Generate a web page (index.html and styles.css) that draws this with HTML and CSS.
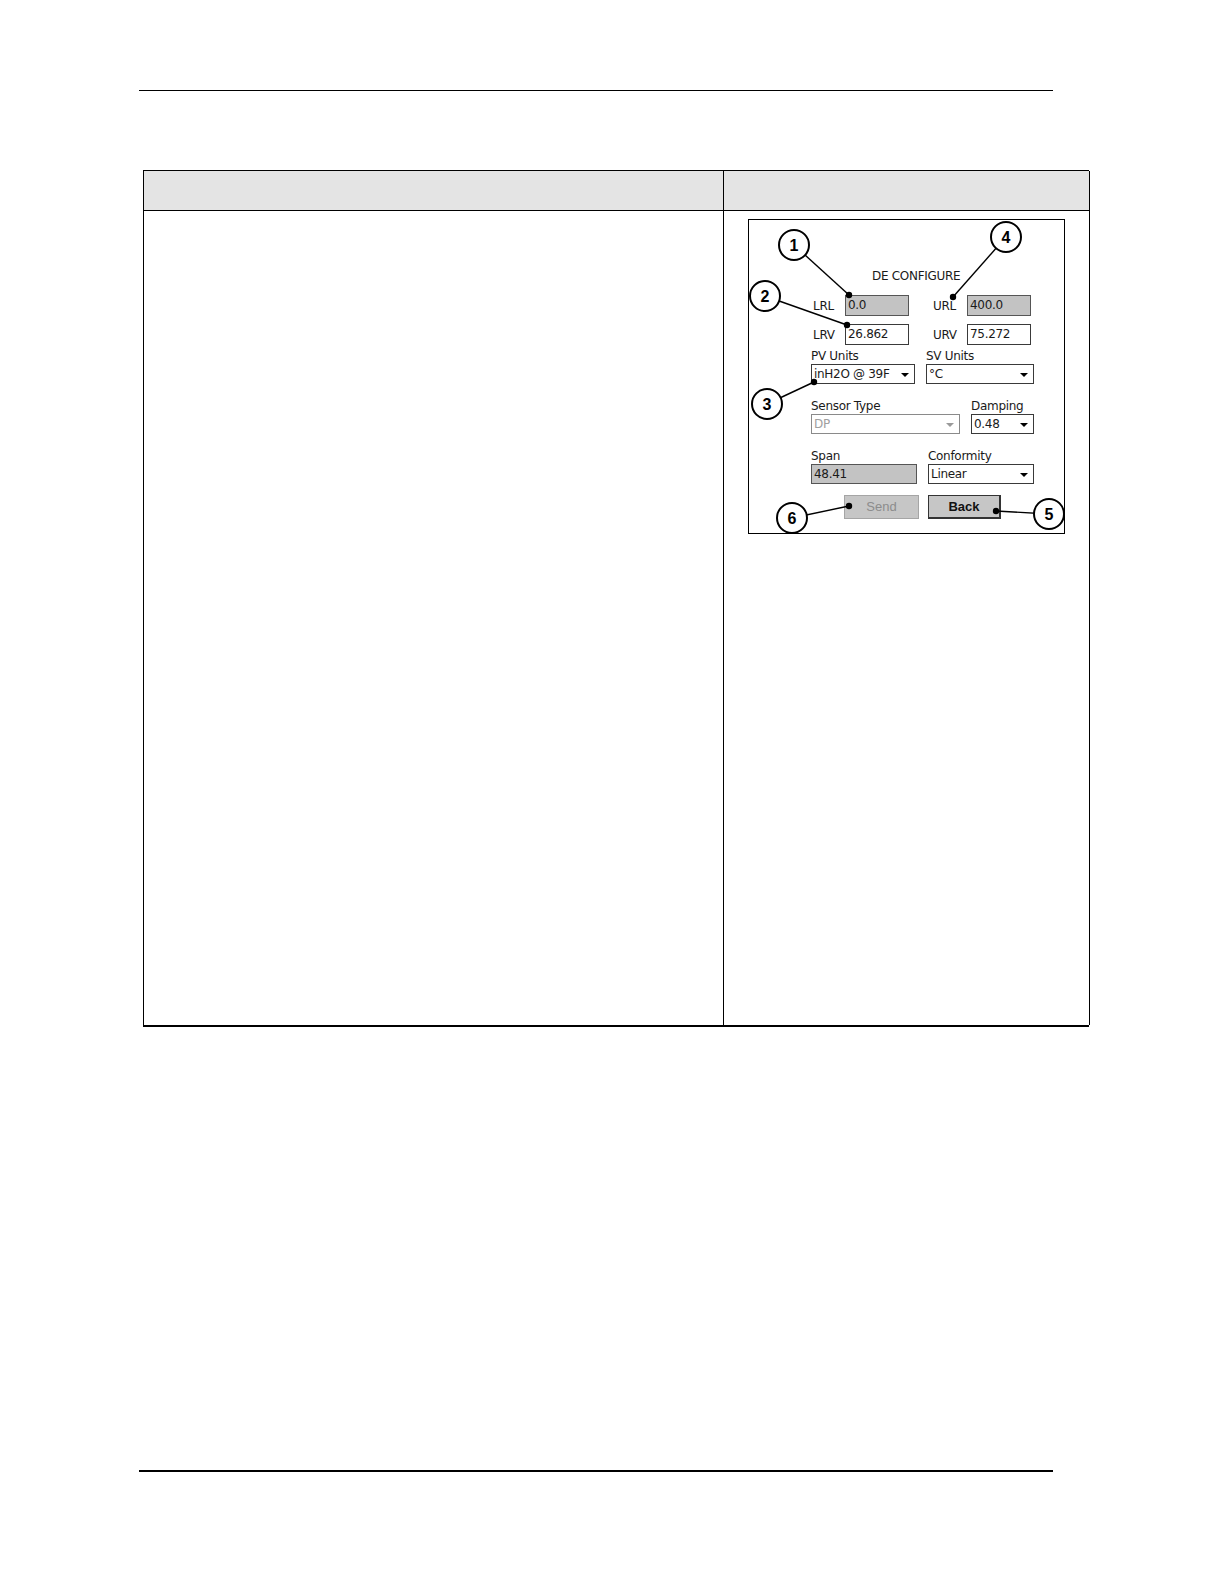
FILE: index.html
```html
<!DOCTYPE html>
<html>
<head>
<meta charset="utf-8">
<title>DE Configure</title>
<link rel="stylesheet" href="styles.css">
</head>
<body>
<div class="page">
  <div class="rule-top"></div>
  <div class="doc-table">
    <div class="cell head left"></div>
    <div class="cell head right"></div>
    <div class="cell body left"></div>
    <div class="cell body right">
      <div class="figure">
        <div class="title">DE CONFIGURE</div>
        <div class="row r1">
          <span class="lbl w32">LRL</span>
          <span class="box grey w64">0.0</span>
          <span class="lbl w34 ml24">URL</span>
          <span class="box grey w64">400.0</span>
        </div>
        <div class="row r2">
          <span class="lbl w32">LRV</span>
          <span class="box w64">26.862</span>
          <span class="lbl w34 ml24">URV</span>
          <span class="box w64">75.272</span>
        </div>
        <div class="row lbls r3l">
          <span class="cap w115">PV Units</span>
          <span class="cap">SV Units</span>
        </div>
        <div class="row r3">
          <span class="box drop w104">inH2O @ 39F<i class="arrow"></i></span>
          <span class="box drop w108 ml11">°C<i class="arrow"></i></span>
        </div>
        <div class="row lbls r4l">
          <span class="cap w160">Sensor Type</span>
          <span class="cap">Damping</span>
        </div>
        <div class="row r4">
          <span class="box drop disabled w149">DP<i class="arrow"></i></span>
          <span class="box drop w63 ml11">0.48<i class="arrow"></i></span>
        </div>
        <div class="row lbls r5l">
          <span class="cap w117">Span</span>
          <span class="cap">Conformity</span>
        </div>
        <div class="row r5">
          <span class="box grey w106">48.41</span>
          <span class="box drop w106 ml11">Linear<i class="arrow"></i></span>
        </div>
        <div class="row btns">
          <span class="btn send">Send</span>
          <span class="btn back">Back</span>
        </div>
        <svg class="callouts" viewBox="0 0 317 315" width="317" height="315">
          <g stroke="#000" stroke-width="1.4" fill="none">
            <line x1="46" y1="26" x2="101" y2="76"/>
            <line x1="17" y1="77" x2="99" y2="106"/>
            <line x1="19" y1="185" x2="66" y2="163"/>
            <line x1="258" y1="18" x2="205" y2="78"/>
            <line x1="301" y1="295" x2="248" y2="292"/>
            <line x1="44" y1="299" x2="101" y2="287"/>
          </g>
          <g fill="#000">
            <circle cx="101" cy="76" r="3.2"/>
            <circle cx="99" cy="106" r="3.2"/>
            <circle cx="66" cy="163" r="3.2"/>
            <circle cx="205" cy="78" r="3.2"/>
            <circle cx="248" cy="292" r="3.2"/>
            <circle cx="101" cy="287" r="3.2"/>
          </g>
          <g fill="#fff" stroke="#000" stroke-width="2">
            <circle cx="46" cy="26" r="15"/>
            <circle cx="17" cy="77" r="15"/>
            <circle cx="19" cy="185" r="15"/>
            <circle cx="258" cy="18" r="15"/>
            <circle cx="301" cy="295" r="15"/>
            <circle cx="44" cy="299" r="15"/>
          </g>
          <g class="nums" text-anchor="middle">
            <text x="46" y="32">1</text>
            <text x="17" y="83">2</text>
            <text x="19" y="191">3</text>
            <text x="258" y="24">4</text>
            <text x="301" y="301">5</text>
            <text x="44" y="305">6</text>
          </g>
        </svg>
      </div>
    </div>
  </div>
  <div class="rule-bottom"></div>
</div>
</body>
</html>
```

FILE: styles.css
```css
html, body {
  margin: 0;
  padding: 0;
  background: #fff;
}
body {
  font-family: "Liberation Sans", Arial, sans-serif;
  color: #000;
}
.page {
  width: 1224px;
  height: 1584px;
  overflow: hidden;
}
.rule-top {
  margin: 90px 0 0 139px;
  width: 914px;
  border-top: 1px solid #000;
}
.doc-table {
  margin: 79px 0 0 143px;
  width: 946px;
  display: grid;
  grid-template-columns: 580px 366px;
  grid-template-rows: 40px 814px;
  border-top: 1px solid #000;
  border-left: 1px solid #000;
  border-bottom: 2px solid #000;
  box-sizing: border-box;
}
.cell {
  box-sizing: border-box;
  border-right: 1px solid #000;
}
.cell.head {
  background: #e4e4e4;
  border-bottom: 1px solid #000;
}
.cell.body.right {
  padding: 8px 0 0 24px;
}
.rule-bottom {
  margin: 443px 0 0 139px;
  width: 914px;
  border-top: 2px solid #000;
}

/* figure */
.figure {
  position: relative;
  width: 317px;
  height: 315px;
  box-sizing: border-box;
  border: 1px solid #000;
  font-family: "DejaVu Sans", Verdana, sans-serif;
  font-size: 12px;
  letter-spacing: -0.3px;
  color: #1a1a1a;
}
.title {
  margin: 49px 0 0 123px;
  height: 14px;
  line-height: 14px;
}
.row {
  display: flex;
  align-items: center;
  padding-left: 62px;
}
.row.r1, .row.r2 { padding-left: 64px; height: 21px; }
.row.r1 { margin-top: 12px; }
.row.r2 { margin-top: 8px; }
.row.lbls { height: 14px; line-height: 14px; }
.row.r3l { margin-top: 4px; }
.row.r3 { height: 20px; margin-top: 1px; }
.row.r4l { margin-top: 15px; }
.row.r4 { height: 20px; margin-top: 1px; }
.row.r5l { margin-top: 15px; }
.row.r5 { height: 20px; margin-top: 1px; }
.row.btns { margin-top: 11px; height: 24px; padding-left: 95px; }

.lbl { display: inline-block; }
.cap { display: inline-block; }
.w32 { width: 32px; }
.w34 { width: 34px; }
.w63 { width: 63px; }
.w64 { width: 64px; }
.w104 { width: 104px; }
.w106 { width: 106px; }
.w108 { width: 108px; }
.w115 { width: 115px; }
.w117 { width: 117px; }
.w149 { width: 149px; }
.w160 { width: 160px; }
.ml24 { margin-left: 24px; }
.ml11 { margin-left: 11px; }

.box {
  position: relative;
  display: inline-block;
  box-sizing: border-box;
  height: 100%;
  border: 1px solid #3a3a3a;
  background: #fff;
  padding: 0 2px;
  line-height: 18px;
  white-space: nowrap;
  overflow: hidden;
}
.row.r1 .box, .row.r2 .box { line-height: 19px; }
.box.grey {
  background: #c3c3c3;
  border-color: #555;
}
.box.drop { padding-right: 14px; }
.box.disabled {
  color: #a0a0a0;
  border-color: #8a8a8a;
}
.arrow {
  position: absolute;
  right: 5px;
  top: 8px;
  width: 0;
  height: 0;
  border-left: 4px solid transparent;
  border-right: 4px solid transparent;
  border-top: 4px solid #000;
}
.box.disabled .arrow { border-top-color: #9a9a9a; }

.btn {
  display: inline-block;
  box-sizing: border-box;
  height: 24px;
  line-height: 22px;
  text-align: center;
  background: #c6c6c6;
  font-family: "Liberation Sans", Arial, sans-serif;
  font-size: 13px;
  letter-spacing: 0;
}
.btn.send {
  width: 75px;
  border: 1px solid #a5a5a5;
  color: #8c8c8c;
}
.btn.back {
  width: 73px;
  margin-left: 9px;
  border: 1px solid #333;
  border-right-width: 2px;
  border-bottom-width: 2px;
  font-weight: bold;
  color: #111;
}

.callouts {
  position: absolute;
  left: -1px;
  top: -1px;
  overflow: visible;
}
.nums {
  font-family: "Liberation Sans", Arial, sans-serif;
  font-weight: bold;
  font-size: 16px;
  letter-spacing: 0;
  fill: #000;
}
```
